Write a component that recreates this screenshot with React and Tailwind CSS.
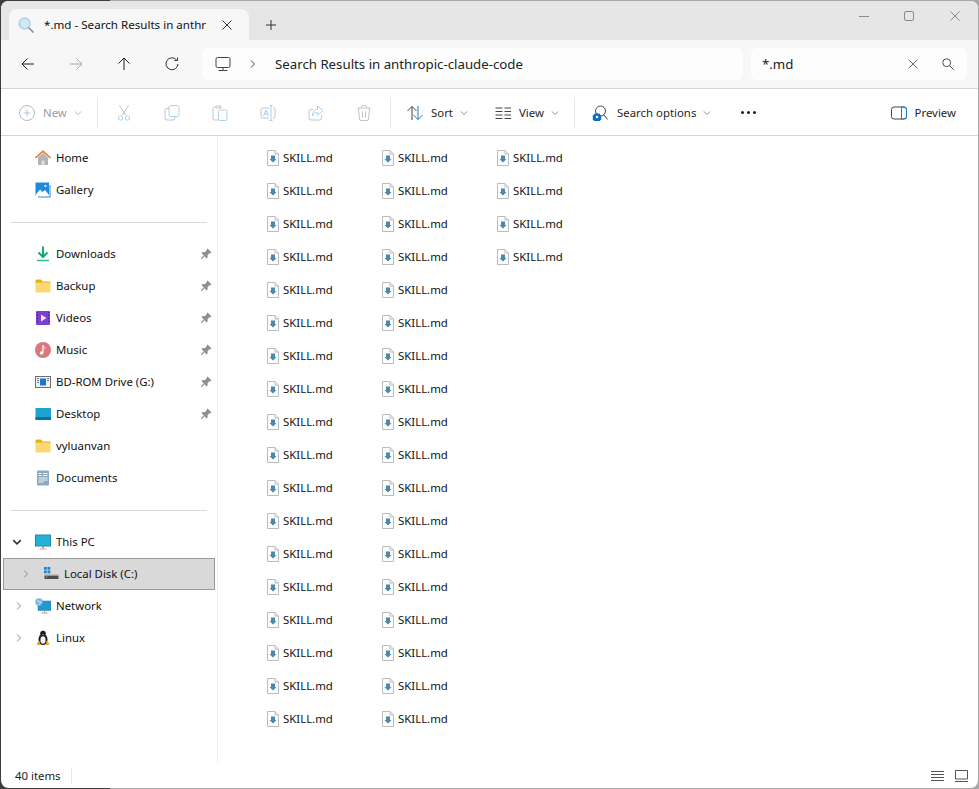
import React from 'react';

// shared svg wrapper, every icon is drawn on a 16 unit grid
const Ico = ({ size = 16, children, className = '' }) => (
  <svg width={size} height={size} viewBox="0 0 16 16" fill="none" className={`shrink-0 ${className}`}>
    {children}
  </svg>
);

const Back = ({ c = '#1f1f1f' }) => (
  <Ico><path d="M14 8H2M7.5 2.5 2 8l5.500 5.500" stroke={c} strokeWidth="1" /></Ico>
);
const Forward = () => (
  <Ico><path d="M2 8h12M8.500 2.500 14 8l-5.500 5.500" stroke="#a8a8a8" strokeWidth="1" /></Ico>
);
const Up = () => (
  <Ico><path d="M8 14V2M2.500 7.500 8 2l5.500 5.500" stroke="#1f1f1f" strokeWidth="1" /></Ico>
);
const Refresh = () => (
  <Ico><path d="M12.500 3.800A6 6 0 1 0 14 8M10.500 4.500h3v-3" stroke="#333" strokeWidth="1" /></Ico>
);
const Monitor = () => (
  <Ico><rect x="1" y="1.500" width="14" height="10" rx="1.500" stroke="#444" /><path d="M8 11.500v2.500M3.500 14.500h9" stroke="#444" /></Ico>
);
const Chevron = ({ c = '#444', size = 8 }) => (
  <svg width={size} height={size} viewBox="0 0 8 8" fill="none" className="shrink-0"><path d="M2 .5 5.500 4 2 7.500" stroke={c} /></svg>
);
const Down = ({ c = '#8c8c8c', w = 1, size = 8 }) => (
  <svg width={size} height={size} viewBox="0 0 8 8" fill="none" className="shrink-0"><path d="M1 2.500 4 5.500l3-3" stroke={c} strokeWidth={w} /></svg>
);
const Close = ({ c = '#444', size = 10 }) => (
  <svg width={size} height={size} viewBox="0 0 10 10" fill="none" className="shrink-0"><path d="M.5.500l9 9M9.500.500l-9 9" stroke={c} /></svg>
);
const Magnifier = () => (
  <Ico size={14}><circle cx="6.500" cy="6.500" r="4.500" stroke="#333" /><path d="m10 10 4.500 4.500" stroke="#333" /></Ico>
);
const TabSearch = () => (
  <Ico>
    <circle cx="6.500" cy="6.500" r="5.500" fill="#cfe8f8" stroke="#94bcd6" />
    <path d="m10.500 10.500 5 5" stroke="#7a8a96" strokeWidth="1.500" />
  </Ico>
);

const NewIcon = () => (
  <Ico><circle cx="8" cy="8" r="7.500" stroke="#b8b8b8" /><path d="M8 4.500v7M4.500 8h7" stroke="#a9c9e6" /></Ico>
);
const Cut = () => (
  <Ico>
    <path d="M3.500 .5 9.500 10M12.500 .5 6.500 10" stroke="#c4c4c4" />
    <circle cx="4.500" cy="13" r="2.200" stroke="#a9d2f0" />
    <circle cx="11.500" cy="13" r="2.200" stroke="#a9d2f0" />
  </Ico>
);
const Copy = () => (
  <Ico>
    <rect x="1" y="3.500" width="10" height="11.500" rx="2" stroke="#c4c4c4" />
    <rect x="5" y=".5" width="10" height="11" rx="2" fill="#fff" stroke="#a9d2f0" />
  </Ico>
);
const Paste = () => (
  <Ico>
    <path d="M4 2H2.500A1.500 1.500 0 0 0 1 3.500v10A1.500 1.500 0 0 0 2.500 15H6M4 1h5v2H4z" stroke="#c4c4c4" />
    <rect x="6.500" y="5" width="8.500" height="10.500" rx="1.500" stroke="#a9d2f0" />
  </Ico>
);
const Rename = () => (
  <Ico>
    <path d="M9 3H2.500A1.500 1.500 0 0 0 1 4.500v7A1.500 1.500 0 0 0 2.500 13H9M13 3h.5A1.500 1.500 0 0 1 15 4.500v7a1.500 1.500 0 0 1-1.500 1.500H13" stroke="#c4c4c4" />
    <path d="M3.500 11 6 5l2.500 6M4.500 9h3" stroke="#a9c9e6" />
    <path d="M11 1v14M9.500.5h3M9.500 15.500h3" stroke="#a9d2f0" />
  </Ico>
);
const Share = () => (
  <Ico>
    <path d="M13.500 10.500v2.500a2 2 0 0 1-2 2H3a2 2 0 0 1-2-2V6.500a2 2 0 0 1 2-2h2" stroke="#c4c4c4" />
    <path d="M9.500 1 15 5.500 9.500 10V7.500C7 7.500 5.500 8.500 4.500 11c0-4 2-6.500 5-6.500z" stroke="#a9d2f0" />
  </Ico>
);
const Trash = () => (
  <Ico>
    <path d="M1 3h14M5.500 3V2A1.500 1.500 0 0 1 7 .5h2A1.500 1.500 0 0 1 10.500 2v1M2.500 3l1 11a1.500 1.500 0 0 0 1.500 1.500h6a1.500 1.500 0 0 0 1.500-1.500l1-11M6.500 6.500v6M9.500 6.500v6" stroke="#c4c4c4" />
  </Ico>
);
const SortIcon = () => (
  <Ico>
    <path d="M5 15V1.500M.5 6 5 1.500 9.500 6" stroke="#444" />
    <path d="M11 1v13.500M6.500 10l4.500 4.500 4.500-4.500" stroke="#0f7fd8" />
  </Ico>
);
const ViewIcon = () => (
  <Ico>
    <path d="M.5 3h7M.5 6.500h7M.5 10h7M.5 13.500h7M9.500 3h7M9.500 6.500h7M9.500 10h7M9.500 13.500h7" stroke="#444" />
  </Ico>
);
const SearchOptions = () => (
  <Ico>
    <circle cx="8.500" cy="6" r="5" stroke="#444" />
    <path d="m12 10 3.500 4.500" stroke="#444" />
    <path d="M5 7.500l1 1.300 1.600-.2.700 1.500 1.200 1-.5 1.600.5 1.500-1.200 1-.7 1.300-1.600-.2-1 .7-1-.7-1.600.2-.7-1.300-1.200-1 .5-1.500-.5-1.600 1.200-1 .7-1.500 1.600.2z" fill="#0f6cc0" />
    <circle cx="5" cy="12" r="1.300" fill="#fff" />
  </Ico>
);
const PreviewIcon = () => (
  <Ico>
    <rect x=".5" y="2" width="15" height="12" rx="2.500" stroke="#444" />
    <path d="M10.500 2h2.500a2.500 2.500 0 0 1 2.500 2.500v7A2.500 2.500 0 0 1 13 14h-2.500z" stroke="#0f7fd8" />
  </Ico>
);

const Pin = () => (
  <Ico size={12}>
    <path d="M10 .5 15.500 6l-1.500 1-1-.2-3 3 .2 3-1.200 1.200-3-3L2 15l-1-1 4-4.500-3-3L3.200 5.300l3 .2 3-3L9 1.500z" fill="#8f8f8f" />
  </Ico>
);

const HomeIcon = () => (
  <Ico>
    <path d="M3 7.500 8 3l5 4.500V15H3z" fill="#b4b4b4" />
    <path d="M6.500 15v-4.500h3V15z" fill="#dedede" />
    <path d="M.5 8 8 1.200 15.500 8" stroke="#e3711c" strokeWidth="1.500" />
  </Ico>
);
const GalleryIcon = () => (
  <Ico>
    <path d="M3 15.500h12.500V3h-1v11.500H3z" fill="#3f82c9" />
    <rect x=".5" y=".5" width="13.500" height="13.500" fill="#1a8ce0" />
    <path d="M.5 13 5 7.500l2.500 2.500L10 8l4 5v1H.5z" fill="#fff" />
    <circle cx="10.500" cy="4" r="1.200" fill="#bfe2fa" />
  </Ico>
);
const DownloadIcon = () => (
  <Ico>
    <path d="M8 .5v9.500" stroke="#19a67e" strokeWidth="2" />
    <path d="M3.500 6.500 8 11l4.500-4.500" stroke="#19a67e" strokeWidth="2" />
    <path d="M2 14.500h12" stroke="#2dbd97" strokeWidth="1.500" />
  </Ico>
);
const FolderIcon = () => (
  <Ico>
    <path d="M.5 2.500A1 1 0 0 1 1.500 1.500H6l2 2h7a.5.5 0 0 1 .5.500v2h-15z" fill="#f0ac16" />
    <path d="M.5 4.500H15.500V13.500a1 1 0 0 1-1 1h-13a1 1 0 0 1-1-1z" fill="#fcd872" />
  </Ico>
);
const VideosIcon = () => (
  <Ico>
    <rect x="1" y="1" width="14" height="14" rx="1" fill="#7c3fd0" />
    <path d="M2 2.500h1M2 5.500h1M2 8.500h1M2 11.500h1M13 2.500h1M13 5.500h1M13 8.500h1M13 11.500h1" stroke="#3e1a78" />
    <path d="M6 4.500v7L11.500 8z" fill="#efe7fb" />
  </Ico>
);
const MusicIcon = () => (
  <Ico>
    <circle cx="8" cy="8" r="8" fill="#d9777a" />
    <path d="M8 3.500v7.500" stroke="#fff" strokeWidth="1.300" />
    <circle cx="6.500" cy="11" r="1.800" fill="#fff" />
    <path d="M8 3.500c.5 1.500 2 1.500 2.500 3" stroke="#fff" />
  </Ico>
);
const DriveIcon = () => (
  <Ico>
    <rect x=".5" y="2.500" width="15" height="11" fill="#f2f2f2" stroke="#707070" />
    <rect x="5" y="4.500" width="6" height="7" fill="#1478d4" />
    <path d="M2 4.500h2M2 6.500h2M2 8.500h2M12 4.500h2M12 6.500h2" stroke="#7a7a7a" />
  </Ico>
);
const DesktopIcon = () => (
  <Ico>
    <rect x=".5" y="2" width="15.500" height="12" rx=".5" fill="#1da3cf" />
    <rect x=".5" y="11" width="15.500" height="3" fill="#0d6fa6" />
  </Ico>
);
const DocsIcon = () => (
  <Ico>
    <rect x="2" y="0.500" width="12" height="15" rx="1" fill="#8fa8c0" />
    <path d="M3.500 3.500h3M3.500 5.500h3M8 3.500h4.500M8 5.500h4.500M3.500 8h9M3.500 10h9M3.500 12h5" stroke="#f3f6f9" />
  </Ico>
);
const PcIcon = () => (
  <Ico>
    <rect x=".5" y="1" width="15" height="11" fill="#22b2d9" stroke="#2a86a8" />
    <path d="M8 12v2" stroke="#9a9a9a" strokeWidth="2" />
    <path d="M4.500 15h7" stroke="#aaa" />
  </Ico>
);
const DiskIcon = () => (
  <Ico>
    <path d="M1 1h2.800v2.800H1zM4.500 1h2.800v2.800H4.500zM1 4.500h2.800v2.800H1zM4.500 4.500h2.800v2.800H4.500z" fill="#1a86d8" />
    <rect x="1.500" y="9.500" width="14" height="3.500" fill="#4d4d4d" />
    <path d="M1.500 9h14" stroke="#a0a0a0" />
    <path d="M3 11h1.500" stroke="#4cd964" />
  </Ico>
);
const NetworkIcon = () => (
  <Ico>
    <rect x="3" y="3" width="13" height="9.500" fill="#1f9ad0" stroke="#2a7ca3" strokeWidth=".5" />
    <path d="M9.500 12.500v2M6.500 15h6" stroke="#9a9a9a" />
    <circle cx="4" cy="4" r="3.700" fill="#7bb6e0" />
    <path d="M2 2.500c1 1 3 .5 4 1.500-.5 1.500-2 1-2 3" stroke="#d7eafa" />
  </Ico>
);
const LinuxIcon = () => (
  <Ico>
    <ellipse cx="8" cy="9.500" rx="4.500" ry="5.500" fill="#1c1c1c" />
    <circle cx="8" cy="3.500" r="2.800" fill="#1c1c1c" />
    <ellipse cx="8" cy="10" rx="2.600" ry="3.800" fill="#f4f4f4" />
    <path d="M6.800 4.300h2.400L8 5.300z" fill="#e8a617" />
    <path d="M1.500 13.500 4.500 11l1 4H2.500zM14.500 13.500 11.500 11l-1 4h3z" fill="#e8a617" />
  </Ico>
);
const MdFile = () => (
  <Ico>
    <path d="M2.500.5h7.500l3.500 3.500v11.500h-11z" fill="#fdfdfd" stroke="#bcbcbc" />
    <path d="M10 .5V4h3.500" stroke="#bcbcbc" />
    <path d="M6 5.500h4v3.500h1.500L8 12.500 4.500 9H6z" fill="#4a88ac" />
  </Ico>
);

const ToolAction = ({ children }) => (
  <div className="w-12 h-8 flex items-center justify-center">{children}</div>
);

const Divider = () => <div className="w-px h-[31px] bg-[#e6e6e6] shrink-0" />;

const DropButton = ({ icon, label, width, muted }) => (
  <div className={`flex items-center h-8 ${width}`}>
    {icon}
    <span className={`ml-2 mt-px ${muted ? 'text-[#9a9a9a]' : 'text-[#1f1f1f]'}`}>{label}</span>
    <span className="ml-[7px] flex"><Down c={muted ? '#b5b5b5' : '#8c8c8c'} /></span>
  </div>
);

const NavItem = ({ icon, label, pinned, arrow, open }) => (
  <div className="relative h-8 flex items-center pl-[34px] pr-[3px]">
    {arrow && !open && (
      <span className="absolute left-[14px] top-3 flex"><Chevron c="#8c8c8c" /></span>
    )}
    {arrow && open && (
      <span className="absolute left-[11px] top-[11px] flex"><Down c="#333" w={1.3} size={10} /></span>
    )}
    {icon}
    <span className="ml-[5px] text-[#111] whitespace-nowrap">{label}</span>
    {pinned && <span className="ml-auto mr-[2px] flex"><Pin /></span>}
  </div>
);

const NavRule = () => <div className="h-px bg-[#d9d9d9] ml-[10px] mr-[10px] mt-4 mb-[15px]" />;

const FileCell = () => (
  <div className="w-[115px] h-[33px] flex items-center">
    <MdFile />
    <span className="ml-[2px] text-[#111]">SKILL.md</span>
  </div>
);

const files = Array.from({ length: 40 }, (_, i) => i);

export default function App() {
  return (
    <div className="w-[979px] h-[789px] py-px bg-[linear-gradient(90deg,#3d3d3d_0,#3d3d3d_110px,#a8a8a8_110px)] overflow-hidden font-['Noto_Sans',sans-serif] text-[11.4px] leading-4">
      <div className="w-full h-full flex flex-col bg-white rounded-lg overflow-hidden border-x border-r-[#a8a8a8] border-l-[#3d3d3d]">
        {/* title bar */}
        <div className="h-[39px] bg-[#e6e6e6] flex items-end pl-2 shrink-0">
          <div className="w-[240px] h-[31px] bg-[#f7f7f7] rounded-t-lg flex items-center pl-[9px]">
            <TabSearch />
            <span className="ml-[10px] w-[164px] whitespace-nowrap text-[11.6px] text-[#111]">*.md - Search Results in anthr</span>
            <span className="ml-[14px] flex"><Close c="#333" /></span>
          </div>
          <div className="ml-[17px] h-[31px] flex items-center">
            <svg width="10" height="10" viewBox="0 0 10 10" fill="none"><path d="M5 0v10M0 5h10" stroke="#333" /></svg>
          </div>
          <div className="ml-auto self-start h-[30px] flex items-center pr-[18px]">
            <div className="w-[10px] h-px bg-[#8a8a8a]" />
            <div className="ml-[35px] w-[10px] h-[10px] border border-[#8a8a8a] rounded-[2px]" />
            <div className="ml-[36px] flex"><Close c="#8a8a8a" /></div>
          </div>
        </div>

        {/* nav row */}
        <div className="h-[49px] bg-[#f7f7f7] border-b border-[#d6d6d6] flex items-center shrink-0 pl-[19px] pr-[11px]">
          <Back />
          <span className="ml-8 flex"><Forward /></span>
          <span className="ml-8 flex"><Up /></span>
          <span className="ml-8 flex"><Refresh /></span>
          <div className="ml-[22px] w-[541px] h-8 bg-[#fdfdfd] rounded-md flex items-center pl-[13px]">
            <Monitor />
            <span className="ml-[18px] flex"><Chevron /></span>
            <span className="ml-[18px] text-[13.25px] text-[#222]">Search Results in anthropic-claude-code</span>
          </div>
          <div className="ml-2 w-[216px] h-8 bg-[#fdfdfd] rounded-md flex items-center pl-[11px] pr-3">
            <span className="text-[13.25px] text-[#222]">*.md</span>
            <span className="ml-auto flex"><Close c="#666" /></span>
            <span className="ml-[23px] flex"><Magnifier /></span>
          </div>
        </div>

        {/* command bar */}
        <div className="h-[47px] pt-px bg-white border-b border-[#d6d6d6] flex items-center shrink-0 pl-[18px] pr-[22px]">
          <DropButton icon={<NewIcon />} label="New" width="w-[78px]" muted />
          <Divider />
          <div className="flex ml-[2px]">
            <ToolAction><Cut /></ToolAction>
            <ToolAction><Copy /></ToolAction>
            <ToolAction><Paste /></ToolAction>
            <ToolAction><Rename /></ToolAction>
            <ToolAction><Share /></ToolAction>
            <ToolAction><Trash /></ToolAction>
          </div>
          <div className="ml-[2px]"><Divider /></div>
          <div className="ml-4"><DropButton icon={<SortIcon />} label="Sort" width="w-[88px]" /></div>
          <DropButton icon={<ViewIcon />} label="View" width="w-[79px]" />
          <Divider />
          <div className="ml-[17px]"><DropButton icon={<span className="mr-px flex"><SearchOptions /></span>} label="Search options" width="w-[149px]" /></div>
          <div className="flex gap-[3px]">
            <div className="w-[3px] h-[3px] rounded-full bg-[#222]" />
            <div className="w-[3px] h-[3px] rounded-full bg-[#222]" />
            <div className="w-[3px] h-[3px] rounded-full bg-[#222]" />
          </div>
          <div className="ml-auto flex items-center">
            <PreviewIcon />
            <span className="ml-2 mt-px text-[#1f1f1f]">Preview</span>
          </div>
        </div>

        {/* body */}
        <div className="flex-1 flex min-h-0">
          <div className="w-[217px] border-r border-[#f0f0f0] pt-[6px] shrink-0">
            <NavItem icon={<HomeIcon />} label="Home" />
            <NavItem icon={<GalleryIcon />} label="Gallery" />
            <NavRule />
            <NavItem icon={<DownloadIcon />} label="Downloads" pinned />
            <NavItem icon={<FolderIcon />} label="Backup" pinned />
            <NavItem icon={<VideosIcon />} label="Videos" pinned />
            <NavItem icon={<MusicIcon />} label="Music" pinned />
            <NavItem icon={<DriveIcon />} label="BD-ROM Drive (G:)" pinned />
            <NavItem icon={<DesktopIcon />} label="Desktop" pinned />
            <NavItem icon={<FolderIcon />} label="vyluanvan" />
            <NavItem icon={<DocsIcon />} label="Documents" />
            <NavRule />
            <NavItem icon={<PcIcon />} label="This PC" arrow open />
            <div className="relative h-8 mx-[2px] bg-[#d9d9d9] border border-[#9a9a9a] flex items-center pl-[39px]">
              <span className="absolute left-[18px] top-[11px] flex"><Chevron c="#8c8c8c" /></span>
              <DiskIcon />
              <span className="ml-[5px] text-[#111]">Local Disk (C:)</span>
            </div>
            <NavItem icon={<NetworkIcon />} label="Network" arrow />
            <NavItem icon={<LinuxIcon />} label="Linux" arrow />
          </div>
          <div className="flex-1 pl-[47px] pt-[5px]">
            <div className="grid grid-flow-col grid-rows-[repeat(18,33px)] auto-cols-[115px] justify-start">
              {files.map((id) => <FileCell key={id} />)}
            </div>
          </div>
        </div>

        {/* status bar */}
        <div className="h-[26px] pt-[2px] flex items-center shrink-0 pl-[14px] pr-[10px]">
          <span className="text-[#222]">40 items</span>
          <div className="ml-[10px] w-px h-4 bg-[#e8e8e8]" />
          <div className="ml-auto flex items-center gap-[11px]">
            <svg width="13" height="12" viewBox="0 0 13 12" fill="none"><path d="M0 1.500h13M0 4.500h13M0 7.500h13M0 10.500h13" stroke="#555" /></svg>
            <svg width="13" height="12" viewBox="0 0 13 12" fill="none"><path d="M.5.500h12v8.500H.5zM0 11.500h13" stroke="#555" /></svg>
          </div>
        </div>
      </div>
    </div>
  );
}
